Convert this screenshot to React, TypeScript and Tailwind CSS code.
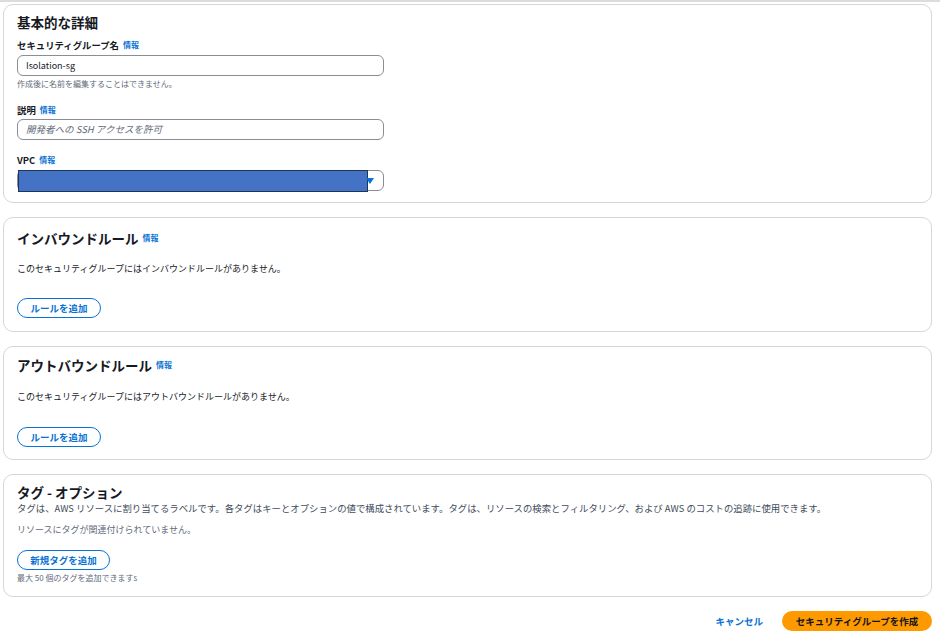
import React from "react";

const font = { fontFamily: '"Noto Sans CJK JP", "Noto Sans", sans-serif' };

function Info() {
  return <span className="ml-[4px] text-[8px] font-bold leading-[12px] text-[#0972d3]">情報</span>;
}

function Card({ className, children }: { className: string; children: React.ReactNode }) {
  return (
    <div className={"rounded-[10px] border border-[#d5d6d8] bg-white px-[13px] " + className}>{children}</div>
  );
}

function Label({ className, children }: { className: string; children: React.ReactNode }) {
  return (
    <div className={"flex h-[16px] items-center text-[9.4px] font-bold leading-[16px] " + className}>{children}</div>
  );
}

function PillButton({ children, w }: { children: React.ReactNode; w: string }) {
  return (
    <div
      className={
        "flex h-[20px] items-center justify-center rounded-full border border-[#0972d3] text-[9.5px] font-bold text-[#0972d3] " +
        w
      }
    >
      {children}
    </div>
  );
}

export default function App() {
  return (
    <div className="min-h-[642px] w-[940px] bg-white text-[#16191f]" style={font}>
      <div className="h-[2px] w-full bg-[#dcdcdc]" />
      <div className="ml-[3px] mt-[2px] flex w-[929px] flex-col gap-[14px]">
        <Card className="h-[199px] pt-[8px]">
          <div className="flex h-[18px] items-center text-[13.5px] font-bold leading-[18px]">基本的な詳細</div>
          <Label className="mt-[6px]">
            セキュリティグループ名<Info />
          </Label>
          <div className="mt-[2px] flex h-[21px] w-[367px] items-center rounded-[6px] border border-[#8c8c94] px-[8px] text-[9px]">
            Isolation-sg
          </div>
          <div className="mt-[2px] h-[12px] text-[8px] leading-[12px] text-[#5f6b7a]">作成後に名前を編集することはできません。</div>
          <Label className="mt-[12px]">
            説明<Info />
          </Label>
          <div className="mt-[1px] flex h-[21px] w-[367px] items-center rounded-[6px] border border-[#8c8c94] px-[8px] text-[9.5px] italic text-[#5f6b7a]">
            開発者への SSH アクセスを許可
          </div>
          <Label className="mt-[12px]">
            VPC<Info />
          </Label>
          <div className="relative mt-[2px] flex h-[21px] w-[367px] items-center rounded-[6px] border border-[#8c8c94]">
            <div className="absolute left-[0px] top-[-1px] h-[22px] w-[350px] border border-[#1f3558] bg-[#4472c4]" />
            <svg className="absolute right-[9px] top-[7px]" width="8" height="6" viewBox="0 0 8 6">
              <path d="M0 0 L8 0 L4 6 Z" fill="#0972d3" />
            </svg>
          </div>
        </Card>

        <Card className="h-[115px] pt-[10px]">
          <div className="flex h-[20px] items-center text-[13.5px] font-bold leading-[20px]">
            インバウンドルール<Info />
          </div>
          <div className="mt-[13px] text-[9px] leading-[16px]">このセキュリティグループにはインバウンドルールがありません。</div>
          <div className="mt-[21px]">
            <PillButton w="w-[84px]">ルールを追加</PillButton>
          </div>
        </Card>

        <Card className="h-[114px] pt-[8px]">
          <div className="flex h-[20px] items-center text-[13.5px] font-bold leading-[20px]">
            アウトバウンドルール<Info />
          </div>
          <div className="mt-[14px] text-[9px] leading-[16px]">このセキュリティグループにはアウトバウンドルールがありません。</div>
          <div className="mt-[22px]">
            <PillButton w="w-[84px]">ルールを追加</PillButton>
          </div>
        </Card>

        <Card className="h-[123px] pt-[8px]">
          <div className="h-[18px] text-[13.5px] font-bold leading-[18px]">タグ - オプション</div>
          <div className="text-[9.4px] leading-[14px] text-[#414d5c]">
            タグは、AWS リソースに割り当てるラベルです。各タグはキーとオプションの値で構成されています。タグは、リソースの検索とフィルタリング、および AWS のコストの追跡に使用できます。
          </div>
          <div className="mt-[8px] text-[9px] leading-[14px] text-[#5f6b7a]">リソースにタグが関連付けられていません。</div>
          <div className="mt-[13px]">
            <PillButton w="w-[93px]">新規タグを追加</PillButton>
          </div>
          <div className="mt-[2px] text-[8px] leading-[12px] text-[#5f6b7a]">最大 50 個のタグを追加できますs</div>
        </Card>

        <div className="flex items-center justify-end gap-[19px]">
          <span className="text-[9.5px] font-bold text-[#0972d3]">キャンセル</span>
          <div className="flex h-[20px] w-[150px] items-center justify-center rounded-full bg-[#ff9900] text-[9.5px] font-bold text-[#0f141a]">
            セキュリティグループを作成
          </div>
        </div>
      </div>
    </div>
  );
}
